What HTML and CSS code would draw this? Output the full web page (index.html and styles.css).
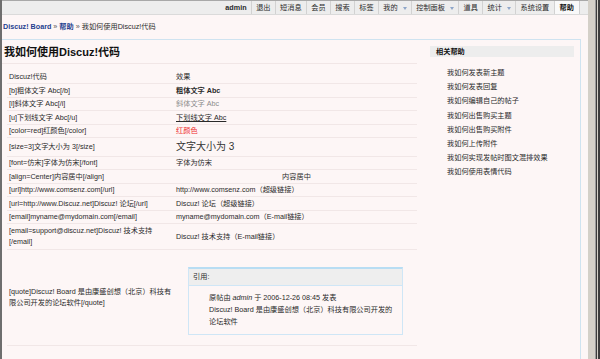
FILE: index.html
```html
<!DOCTYPE html>
<html lang="zh-CN">
<head>
<meta charset="utf-8">
<title>我如何使用Discuz!代码</title>
<link rel="stylesheet" href="styles.css">
</head>
<body>
<div class="window">
  <div class="lframe"></div>
  <div class="page">
    <div class="topbar">
      <ul class="nav">
        <li class="user">admin</li>
        <li>退出</li>
        <li>短消息</li>
        <li>会员</li>
        <li>搜索</li>
        <li>标签</li>
        <li>我的<span class="arrow"></span></li>
        <li>控制面板<span class="arrow"></span></li>
        <li>道具</li>
        <li>统计<span class="arrow"></span></li>
        <li>系统设置</li>
        <li class="active">帮助</li>
      </ul>
    </div>
    <div class="crumb">
      <a class="home">Discuz! Board</a> <span class="sep">»</span> <a class="cur">帮助</a> <span class="sep">»</span> 我如何使用Discuz!代码
    </div>
    <div class="box">
      <div class="main">
        <h1>我如何使用Discuz!代码</h1>
        <div class="codes">
          <div class="row"><div class="c1">Discuz!代码</div><div class="c2">效果</div></div>
          <div class="row"><div class="c1">[b]粗体文字 Abc[/b]</div><div class="c2"><b>粗体文字 Abc</b></div></div>
          <div class="row"><div class="c1">[i]斜体文字 Abc[/i]</div><div class="c2"><span class="it">斜体文字 Abc</span></div></div>
          <div class="row"><div class="c1">[u]下划线文字 Abc[/u]</div><div class="c2"><u>下划线文字 Abc</u></div></div>
          <div class="row"><div class="c1">[color=red]红颜色[/color]</div><div class="c2"><span class="red">红颜色</span></div></div>
          <div class="row size"><div class="c1">[size=3]文字大小为 3[/size]</div><div class="c2"><span class="big">文字大小为 3</span></div></div>
          <div class="row"><div class="c1">[font=仿宋]字体为仿宋[/font]</div><div class="c2">字体为仿宋</div></div>
          <div class="row"><div class="c1">[align=Center]内容居中[/align]</div><div class="c2 center">内容居中</div></div>
          <div class="row"><div class="c1">[url]http://www.comsenz.com[/url]</div><div class="c2">http://www.comsenz.com（超级链接）</div></div>
          <div class="row"><div class="c1">[url=http://www.Discuz.net]Discuz! 论坛[/url]</div><div class="c2">Discuz! 论坛（超级链接）</div></div>
          <div class="row"><div class="c1">[email]myname@mydomain.com[/email]</div><div class="c2">myname@mydomain.com（E-mail链接）</div></div>
          <div class="row two"><div class="c1">[email=support@discuz.net]Discuz! 技术支持[/email]</div><div class="c2">Discuz! 技术支持（E-mail链接）</div></div>
          <div class="row quoterow">
            <div class="c1">[quote]Discuz! Board 是由康盛创想（北京）科技有限公司开发的论坛软件[/quote]</div>
            <div class="c2">
              <div class="quote">
                <div class="qhead">引用:</div>
                <div class="qbody">原帖由 <i>admin</i> 于 2006-12-26 08:45 发表<br>Discuz! Board 是由康盛创想（北京）科技有限公司开发的<br>论坛软件</div>
              </div>
            </div>
          </div>
        </div>
      </div>
      <div class="side">
        <h3>相关帮助</h3>
        <ul>
          <li>我如何发表新主题</li>
          <li>我如何发表回复</li>
          <li>我如何编辑自己的帖子</li>
          <li>我如何出售购买主题</li>
          <li>我如何出售购买附件</li>
          <li>我如何上传附件</li>
          <li>我如何实现发帖时图文混排效果</li>
          <li>我如何使用表情代码</li>
        </ul>
      </div>
    </div>
  </div>
  <div class="rframe"></div>
</div>
</body>
</html>
```
FILE: styles.css
```css
html, body {
  margin: 0;
  padding: 0;
  background: #fdf6f6;
}
body {
  font-family: "Liberation Sans", "Noto Sans CJK SC", sans-serif;
  font-size: 7.2px;
  color: #2a2a2a;
}
.window {
  display: flex;
  width: 600px;
  height: 359px;
  overflow: hidden;
}
.lframe {
  width: 2px;
  background: #6e6e6e;
}
.rframe {
  width: 12px;
  background: linear-gradient(to right, #d4d0c8 0 7px, #9a9a9a 7px 8px, #3c3c3c 8px 9px, #d4d0c8 9px 10px, #3c3c3c 10px 12px);
}
.page {
  flex: 1;
  display: flex;
  flex-direction: column;
  background: #fdf6f6;
  border-top: 1px solid #a8a8a8;
}
.topbar {
  height: 13px;
  display: flex;
  justify-content: flex-end;
  background: #ededed;
  border-bottom: 1px solid #dadada;
  padding-right: 8px;
}
.nav {
  display: flex;
  list-style: none;
  margin: 0;
  padding: 0;
  border-right: 1px solid #cfcfcf;
}
.nav li {
  padding: 0 4.3px;
  line-height: 13px;
  border-left: 1px solid #d2d2d2;
  white-space: nowrap;
}
.nav li.user {
  border-left: 0;
  font-weight: bold;
}
.nav li.active {
  background: #f9f9f9;
  font-weight: bold;
  color: #111;
  padding: 0 5px;
}
.arrow {
  display: inline-block;
  width: 0;
  height: 0;
  border-left: 2.5px solid transparent;
  border-right: 2.5px solid transparent;
  border-top: 3px solid #8ea6c9;
  margin-left: 5px;
  vertical-align: middle;
}
.crumb {
  height: 24px;
  line-height: 24px;
  padding-left: 1px;
  white-space: nowrap;
}
.crumb a {
  font-weight: bold;
  color: #1d3f8f;
  text-decoration: none;
}
.crumb .sep {
  color: #555;
}
.box {
  flex: 1;
  display: flex;
  border-top: 1px solid #cfe3f0;
  border-right: 1px solid #cfe3f0;
  margin-right: 7px;
}
.main {
  width: 415px;
}
h1 {
  margin: 0;
  font-size: 11px;
  line-height: 13px;
  padding: 6px 0 4px 2px;
  border-bottom: 1px solid #f1e6e6;
  color: #111;
}
.codes {
  margin: 6.5px 0 0 5px;
  width: 410px;
}
.row {
  display: flex;
  align-items: center;
  min-height: 12.5px;
  border-bottom: 1px solid #f1e7e7;
  line-height: 9px;
}
.c1 {
  width: 165px;
  padding-left: 2px;
}
.c2 {
  flex: 1;
  padding-left: 2px;
}
.c2.center {
  text-align: center;
}
.row.size {
  min-height: 17.5px;
}
.row.two {
  min-height: 24.5px;
}
.row.two .c1 {
  line-height: 11px;
}
.row.quoterow {
  min-height: 93px;
}
.row.quoterow .c1 {
  line-height: 11px;
}
.row.quoterow .c2 {
  align-self: flex-start;
}
.it {
  color: #8c8c8c;
}
.red {
  color: #ee2a2a;
}
.big {
  font-size: 10px;
  line-height: 12px;
  color: #333;
}
.quote {
  margin: 17px 0 10px 12px;
  width: 213px;
  border: 1px solid #cfe6f6;
  border-top: 2px solid #b8ddf3;
}
.qhead {
  height: 16px;
  line-height: 16px;
  padding-left: 4px;
  background: #eeeeee;
  border-bottom: 1px solid #cfe6f6;
}
.qbody {
  padding: 6px 4px 6px 20px;
  line-height: 12px;
}
.side {
  width: 144px;
  margin-left: 13px;
}
.side h3 {
  margin: 6px 0 0;
  height: 11px;
  line-height: 11px;
  background: #ededed;
  padding-left: 6px;
  font-size: 7.2px;
  font-weight: bold;
  color: #111;
}
.side ul {
  list-style: none;
  margin: 9px 0 0;
  padding: 0 0 0 17px;
}
.side li {
  line-height: 14.2px;
  white-space: nowrap;
}
```
